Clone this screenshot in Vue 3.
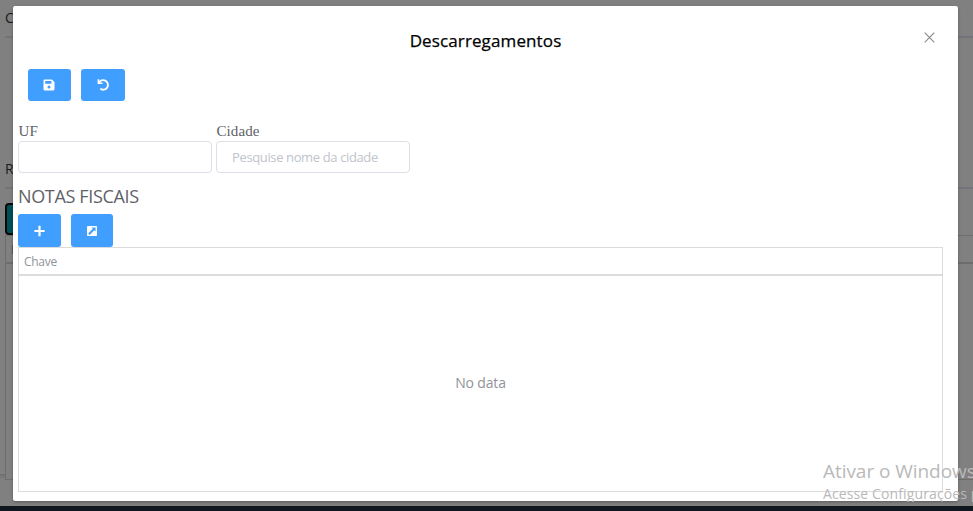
<script setup>
const title = 'Descarregamentos'
</script>

<template>
  <div class="screen">
    <div class="page">
      <header class="page-head">C</header>
      <section class="page-section">R</section>
      <div class="page-action"></div>
      <div class="page-table">
        <div class="page-table-head">I</div>
        <div class="page-table-body"></div>
      </div>
    </div>
    <div class="page-shade"></div>
    <div class="taskbar"></div>

    <section class="dialog" role="dialog">
      <header class="dialog-head">
        <h2>{{ title }}</h2>
        <svg class="close" viewBox="0 0 11 11"><path d="M.7.7l9.6 9.6M10.3.7L.7 10.3" /></svg>
      </header>

      <div class="toolbar main-tools">
        <button class="btn">
          <svg class="icon" viewBox="0 0 12 12"><path fill="#fff" fill-rule="evenodd" d="M1.7.5h7.2l2.6 2.6v7.2c0 .7-.5 1.2-1.2 1.2H1.7c-.7 0-1.2-.5-1.2-1.2V1.7C.5 1 1 .5 1.7.5zM2.2 2.1v2.6h6.2V2.1zM6 6.4a1.5 1.5 0 1 0 0 3 1.5 1.5 0 0 0 0-3z" /></svg>
        </button>
        <button class="btn wide">
          <svg class="icon undo" viewBox="0 0 13 12"><path fill="#fff" d="M.6.3h1.6v3.1h3.3V5H.6z" /><path fill="none" stroke="#fff" stroke-width="1.8" d="M1.7 4.1A4.8 4.8 0 1 1 3.3 9.8" /></svg>
        </button>
      </div>

      <div class="fields">
        <label class="field"><span>UF</span><input type="text" /></label>
        <label class="field"><span>Cidade</span><input type="text" placeholder="Pesquise nome da cidade" /></label>
      </div>

      <h3><span>NOTAS FISCAIS</span></h3>
      <div class="toolbar">
        <button class="btn tall">
          <svg class="icon" viewBox="0 0 12 12"><path fill="#fff" d="M5.4.8h2.2v4.1h4v2.2h-4v4.1H5.4V7.1h-4V4.9h4z" /></svg>
        </button>
        <button class="btn tall narrow">
          <svg class="icon square" viewBox="0 0 12 12"><rect x="1" y="1" width="10" height="10" rx=".8" fill="#fff" /><path fill="#409eff" d="M5.5 2.4h4.1v4.1L8.3 5.2 3.6 9.9 2.2 8.5l4.6-4.7z" /></svg>
        </button>
      </div>

      <div class="table">
        <div class="table-head">Chave</div>
        <div class="table-body"><span>No data</span></div>
      </div>
    </section>

    <div class="watermark">
      <p class="mark-title">Ativar o Windows</p>
      <p class="mark-text">Acesse Configurações para ativar o Windows.</p>
    </div>
  </div>
</template>

<style>
body { margin: 0; overflow: hidden; }
</style>

<style scoped>
* { box-sizing: border-box; }
.screen {
  position: relative;
  width: 973px;
  height: 511px;
  overflow: hidden;
  display: flex;
  flex-direction: column;
  background: #808080;
  font-family: "Open Sans", "Noto Sans", sans-serif;
}
.page { flex: 1; padding-left: 5px; color: #191a1c; font-size: 14px; }
.page-head { height: 38px; padding-top: 8px; border-bottom: 2px solid #73747a; }
.page-section { height: 151px; padding-top: 121px; border-bottom: 2px solid #73747a; }
.page-action { width: 60px; height: 32px; margin-top: 14px; border: 2px solid #050808; border-radius: 4px; background: #005057; }
.page-table { height: 245px; border: 1px solid #6d6d6d; border-right: 0; }
.page-table-head { height: 28px; padding: 5px; border-bottom: 2px solid #6d6d6d; color: #4c4d50; font-size: 12px; }
.page-shade { position: absolute; left: 0; top: 474px; width: 5px; height: 5px; background: linear-gradient(#707070, #808080); }
.taskbar { height: 5px; background: #10171e; }
.dialog {
  position: absolute;
  left: 13px;
  top: 6px;
  width: 945px;
  height: 495px;
  padding: 0 15px 9px 5px;
  display: flex;
  flex-direction: column;
  border-radius: 2px;
  background: #fff;
  box-shadow: 0 1px 3px rgba(0, 0, 0, .3);
}
.dialog-head { display: flex; justify-content: center; position: relative; height: 63px; padding: 22px 0 0 10px; }
h2 { margin: 0; color: #000; font-size: 17px; font-weight: 400; line-height: 26px; letter-spacing: .12px; -webkit-text-stroke: .25px #000; }
.close { position: absolute; right: 8px; top: 26px; width: 11px; height: 11px; fill: none; stroke: #85888e; stroke-width: 1.1; }
.toolbar { display: flex; gap: 10px; }
.main-tools { padding-left: 10px; }
.btn {
  display: flex;
  align-items: center;
  justify-content: center;
  width: 43px;
  height: 32px;
  padding: 0 1px 0 0;
  border: 0;
  border-radius: 3px;
  background: #409eff;
}
.wide { width: 44px; padding: 0; }
.narrow { width: 42px; padding: 0; }
.tall { height: 33px; }
.icon { width: 12px; height: 12px; }
.undo { width: 13px; }
.fields { display: flex; gap: 4px; margin-top: 20px; }
.field { display: flex; flex-direction: column; width: 194px; color: #606266; font-family: "Liberation Serif", serif; font-size: 15px; }
.field span { height: 20px; padding-left: .5px; line-height: 20px; letter-spacing: .1px; }
input {
  width: 100%;
  height: 32px;
  padding: 0 15px;
  border: 1px solid #dcdfe6;
  border-radius: 4px;
  background: #fff;
  font: 13px "Open Sans", sans-serif;
  letter-spacing: -.37px;
}
input::placeholder { color: #c0c4cc; opacity: 1; }
h3 { height: 41px; margin: 0; padding-top: 10px; color: #606266; font-size: 18px; line-height: 26px; font-weight: 400; letter-spacing: -.35px; }
.table { flex: 1; display: flex; flex-direction: column; border: 1px solid #dcdcdc; }
.table-head { height: 28px; padding: 0 5px; border-bottom: 2px solid #dcdcdc; color: #909399; font-size: 12px; line-height: 27px; letter-spacing: -.3px; }
.table-body { flex: 1; display: flex; align-items: center; justify-content: center; padding-bottom: 2px; color: #909399; font-size: 14px; letter-spacing: -.15px; }
.watermark { position: absolute; left: 823px; top: 457px; width: 150px; overflow: hidden; color: #b9b9b9; white-space: nowrap; }
.watermark p { margin: 0; }
.mark-title { font-size: 19px; line-height: 28px; letter-spacing: -.05px; }
.mark-text { font-size: 14px; line-height: 17px; letter-spacing: .12px; }
</style>
